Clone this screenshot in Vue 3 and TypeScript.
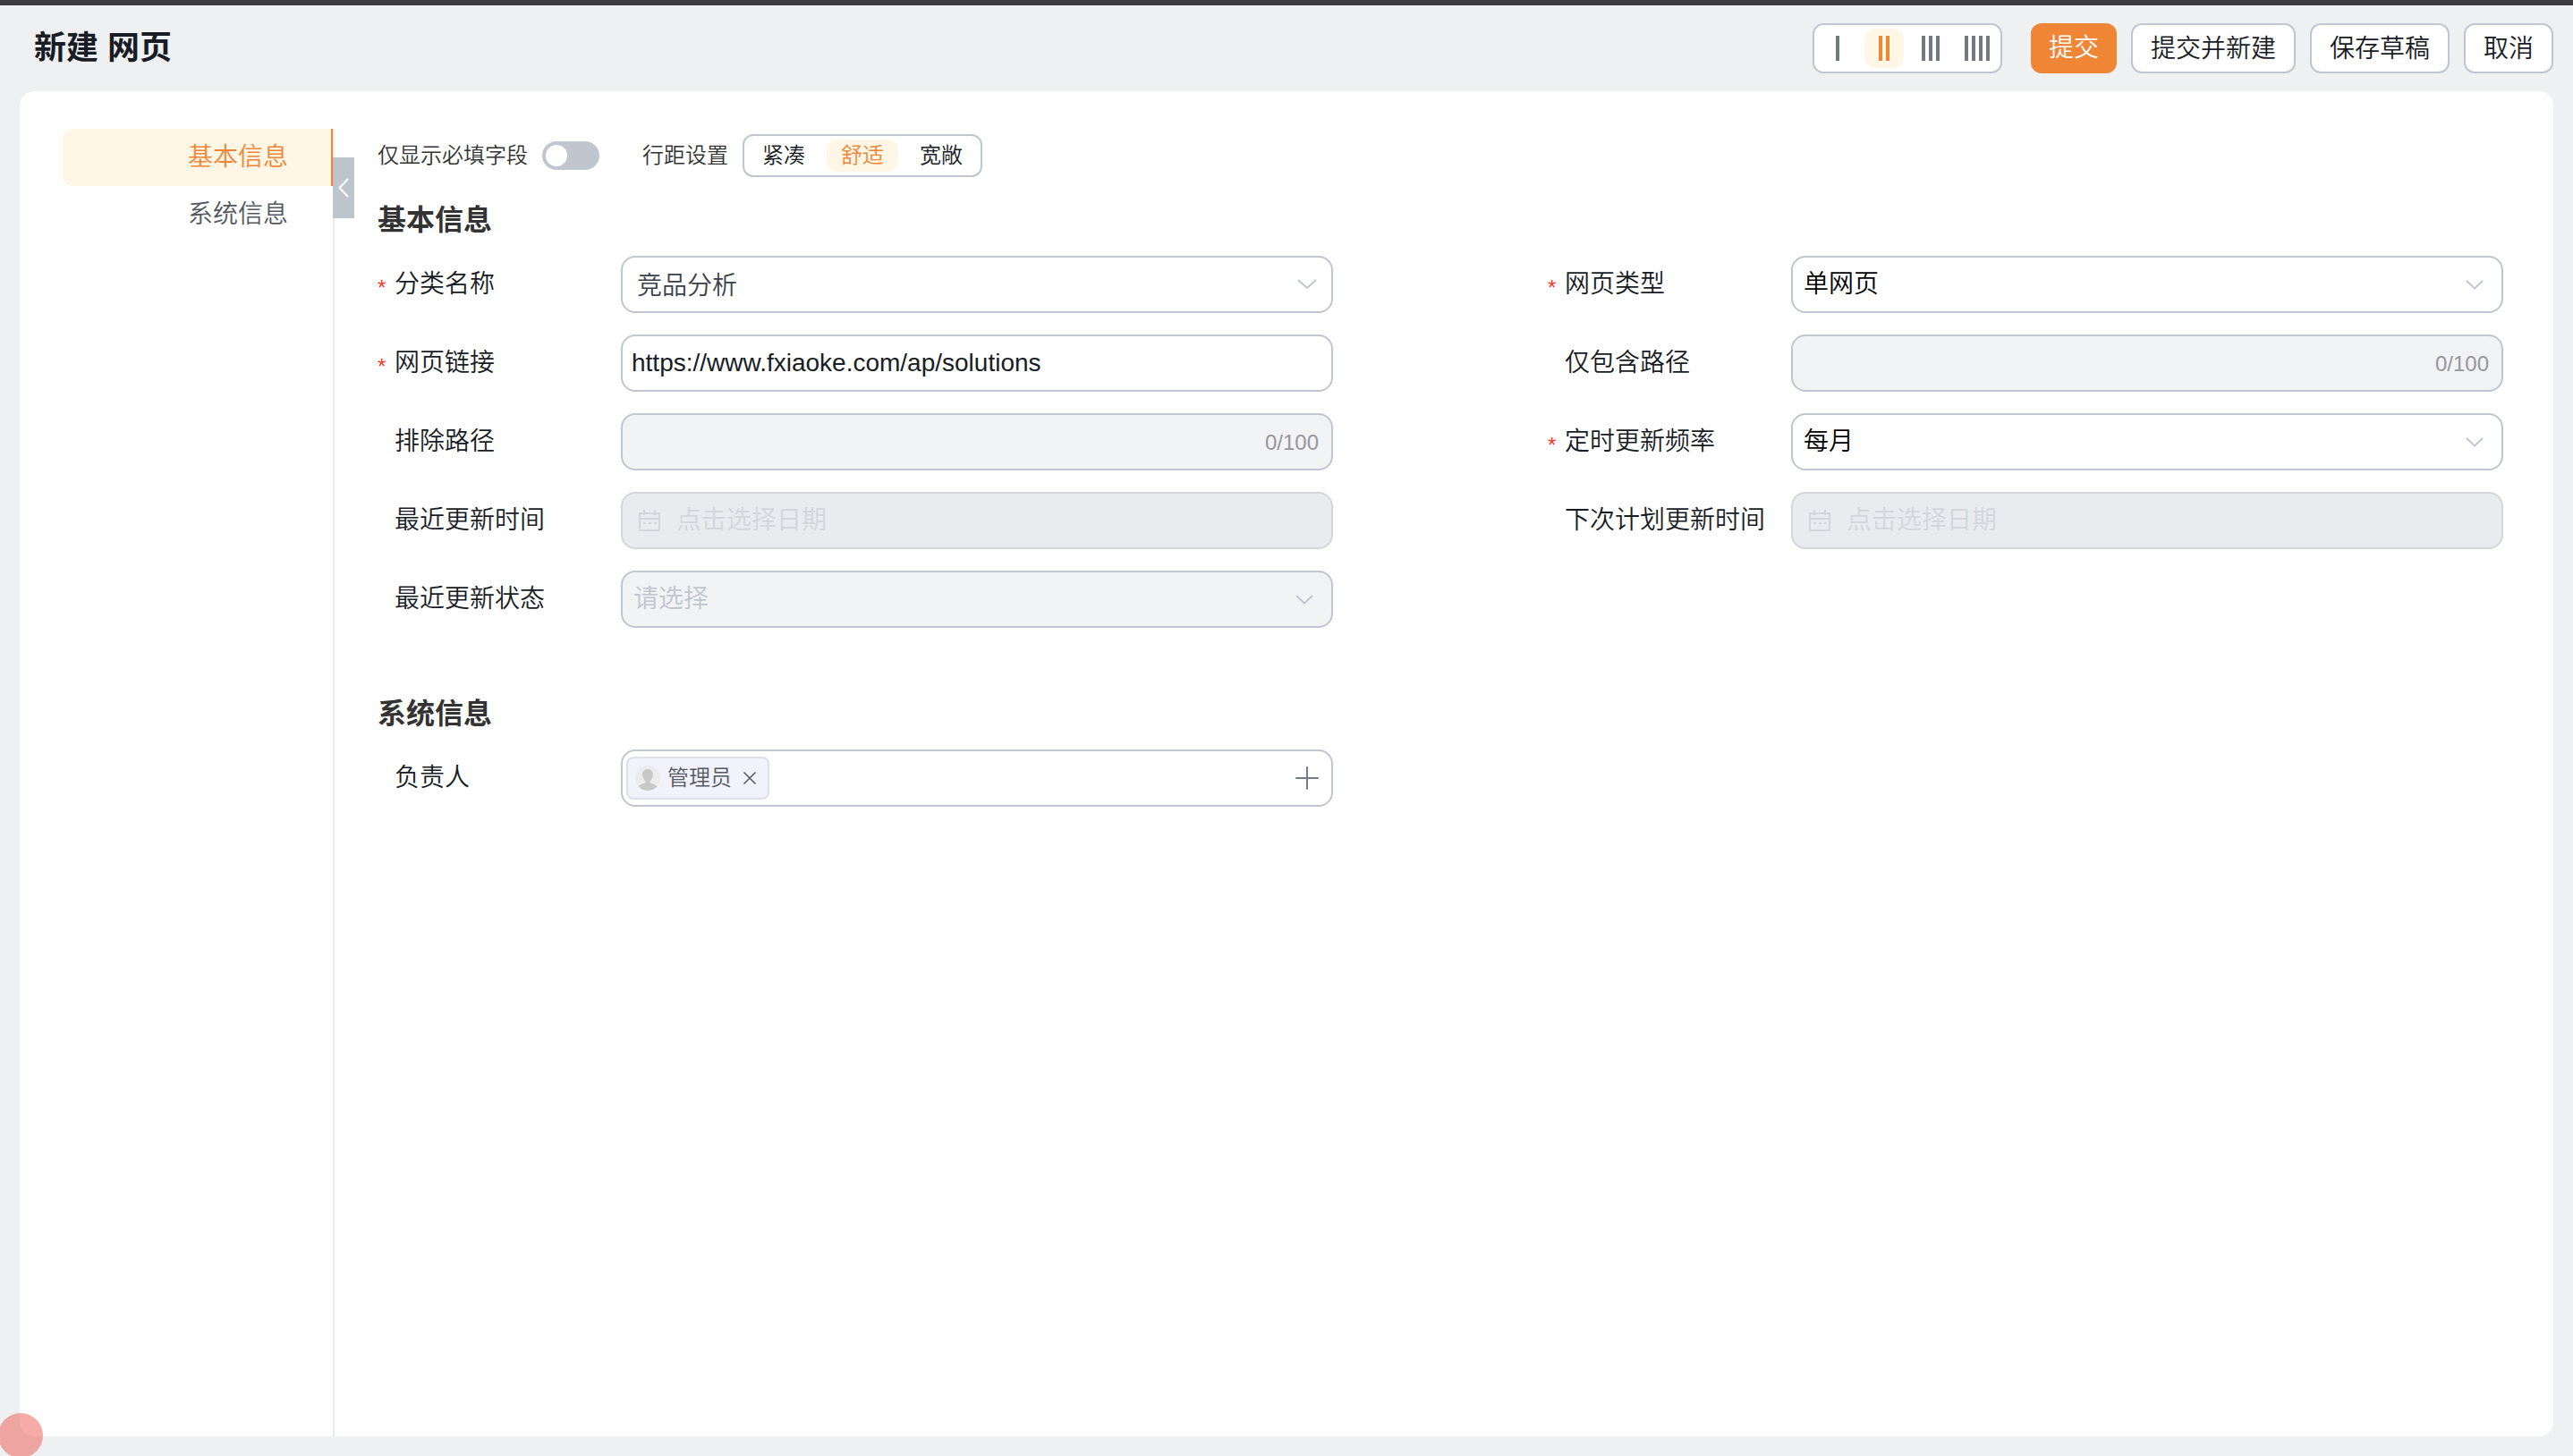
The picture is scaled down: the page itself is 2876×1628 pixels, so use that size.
<script setup lang="ts">
import { ref } from 'vue'

interface Choice {
  value: string
  label: string
}

interface Field {
  id: string
  label: string
  kind: 'search' | 'select' | 'text' | 'counted' | 'date'
  required?: boolean
  disabled?: boolean
  placeholder?: string
}

const navItems: Choice[] = [
  { value: 'basic', label: '基本信息' },
  { value: 'system', label: '系统信息' },
]
const activeNav = ref('basic')

const columnCounts = [1, 2, 3, 4]
const columns = ref(2)

const spacings: Choice[] = [
  { value: 'compact', label: '紧凑' },
  { value: 'comfortable', label: '舒适' },
  { value: 'loose', label: '宽敞' },
]
const spacing = ref('comfortable')
const requiredOnly = ref(false)

const fields: Field[] = [
  { id: 'category', label: '分类名称', kind: 'search', required: true },
  { id: 'pageType', label: '网页类型', kind: 'select', required: true },
  { id: 'url', label: '网页链接', kind: 'text', required: true },
  { id: 'includePath', label: '仅包含路径', kind: 'counted', disabled: true },
  { id: 'excludePath', label: '排除路径', kind: 'counted', disabled: true },
  { id: 'frequency', label: '定时更新频率', kind: 'select', required: true },
  { id: 'lastUpdate', label: '最近更新时间', kind: 'date', disabled: true, placeholder: '点击选择日期' },
  { id: 'nextUpdate', label: '下次计划更新时间', kind: 'date', disabled: true, placeholder: '点击选择日期' },
  { id: 'lastStatus', label: '最近更新状态', kind: 'select', disabled: true, placeholder: '请选择' },
]

const options: Record<string, string[]> = {
  category: ['竞品分析'],
  pageType: ['单网页'],
  frequency: ['每月'],
}

const form = ref<Record<string, string>>({
  category: '竞品分析',
  pageType: '单网页',
  url: 'https://www.fxiaoke.com/ap/solutions',
  includePath: '',
  excludePath: '',
  frequency: '每月',
  lastUpdate: '',
  nextUpdate: '',
  lastStatus: '',
})

const owners = ref<string[]>(['管理员'])
function removeOwner(name: string) {
  owners.value = owners.value.filter((o) => o !== name)
}
</script>

<template>
  <div class="page">
    <header class="header">
      <h1 class="title">新建 网页</h1>
      <div class="columns" role="radiogroup" aria-label="列数">
        <label v-for="n in columnCounts" :key="n" class="column-option" :class="{ active: columns === n }">
          <input v-model="columns" class="hidden-input" type="radio" name="columns" :value="n" :aria-label="`${n} 列`" />
          <svg width="28" height="28" viewBox="0 0 28 28" aria-hidden="true">
            <rect v-for="i in n" :key="i" :x="(i - 1) * 8" y="0" width="4" height="28" fill="currentColor" />
          </svg>
        </label>
      </div>
      <div class="actions">
        <button type="button" class="btn primary">提交</button>
        <button type="button" class="btn">提交并新建</button>
        <button type="button" class="btn">保存草稿</button>
        <button type="button" class="btn">取消</button>
      </div>
    </header>

    <main class="panel">
      <nav class="side">
        <a
          v-for="item in navItems"
          :key="item.value"
          class="side-link"
          :class="{ active: activeNav === item.value }"
          :href="`#${item.value}`"
          @click="activeNav = item.value"
          >{{ item.label }}</a
        >
      </nav>

      <div class="content">
        <button type="button" class="collapse" aria-label="收起">
          <svg width="12" height="22" viewBox="0 0 12 22" aria-hidden="true">
            <path d="M11 1L1.500 11L11 21" fill="none" stroke="#fff" stroke-width="2" />
          </svg>
        </button>

        <div class="toolbar">
          <label for="requiredOnly">仅显示必填字段</label>
          <input id="requiredOnly" v-model="requiredOnly" class="switch" type="checkbox" role="switch" />
          <span id="spacingLabel" class="spacing-label">行距设置</span>
          <div class="spacing" role="radiogroup" aria-labelledby="spacingLabel">
            <label v-for="s in spacings" :key="s.value" class="spacing-option" :class="{ active: spacing === s.value }">
              <input v-model="spacing" class="hidden-input" type="radio" name="spacing" :value="s.value" />{{ s.label }}
            </label>
          </div>
        </div>

        <section>
          <h2 id="basic" class="section-title">基本信息</h2>
          <div class="grid">
            <div v-for="f in fields" :key="f.id" class="field">
              <span class="star">{{ f.required ? '*' : '' }}</span>
              <label class="label" :for="f.id">{{ f.label }}</label>
              <div class="control" :class="[f.kind, { disabled: f.disabled }]">
                <svg v-if="f.kind === 'date'" class="calendar" width="24" height="24" viewBox="0 0 24 24" aria-hidden="true">
                  <path d="M1 4H23V23H1ZM1 10H23M6 0V6M18 0V6" fill="none" stroke="currentColor" stroke-width="2" />
                  <path d="M5 15H8M11 15H14M17 15H20" stroke="currentColor" stroke-width="2" />
                </svg>
                <select v-if="f.kind === 'select' || f.kind === 'search'" :id="f.id" v-model="form[f.id]" :disabled="f.disabled">
                  <option v-if="f.placeholder" value="">{{ f.placeholder }}</option>
                  <option v-for="o in options[f.id]" :key="o" :value="o">{{ o }}</option>
                </select>
                <input
                  v-else
                  :id="f.id"
                  v-model="form[f.id]"
                  type="text"
                  :maxlength="f.kind === 'counted' ? 100 : undefined"
                  :placeholder="f.placeholder"
                  :disabled="f.disabled"
                />
                <span v-if="f.kind === 'counted'" class="counter">{{ form[f.id].length }}/100</span>
                <svg v-if="f.kind === 'search'" class="chevron" width="22" height="12" viewBox="0 0 22 12" aria-hidden="true">
                  <path d="M1.500 1.500L11 10L20.500 1.500" fill="none" stroke="currentColor" stroke-width="2" stroke-linecap="round" />
                </svg>
                <svg v-if="f.kind === 'select'" class="chevron" width="20" height="12" viewBox="0 0 20 12" aria-hidden="true">
                  <path d="M1.500 2.500L10 10.500L18.500 2.500" fill="none" stroke="currentColor" stroke-width="2" stroke-linecap="round" />
                </svg>
              </div>
            </div>
          </div>
        </section>

        <section class="system">
          <h2 id="system" class="section-title">系统信息</h2>
          <div class="grid">
            <div class="field">
              <span class="star"></span>
              <label class="label" for="owner">负责人</label>
              <div class="control people">
                <span v-for="o in owners" :key="o" class="tag">
                  <svg width="28" height="28" viewBox="0 0 28 28" aria-hidden="true">
                    <circle cx="14" cy="14" r="14" fill="#ececec" />
                    <path
                      d="M14 4C10.200 4 8.200 6.500 8.200 10C8.200 13 9.600 16 11.500 17.400V19.200C9 20.500 5.600 20.500 3.800 23.500A14 14 0 0 0 24.200 23.500C22.400 20.500 19 20.500 16.500 19.200V17.400C18.400 16 19.800 13 19.800 10C19.800 6.500 17.800 4 14 4Z"
                      fill="#c8c8c8"
                    />
                  </svg>
                  <span class="tag-name">{{ o }}</span>
                  <button type="button" class="icon-btn" :aria-label="`移除${o}`" @click="removeOwner(o)">
                    <svg width="16" height="16" viewBox="0 0 16 16" aria-hidden="true">
                      <path d="M1.500 1.500L14.500 14.500M14.500 1.500L1.500 14.500" stroke="#545861" stroke-width="1.500" />
                    </svg>
                  </button>
                </span>
                <input id="owner" type="text" />
                <button type="button" class="icon-btn add" aria-label="添加负责人">
                  <svg width="26" height="26" viewBox="0 0 26 26" aria-hidden="true">
                    <path d="M1 13H25M13 1V25" stroke="#737b89" stroke-width="2" stroke-linecap="round" />
                  </svg>
                </button>
              </div>
            </div>
          </div>
        </section>
      </div>
    </main>

    <div class="pointer"></div>
  </div>
</template>

<style>
body {
  margin: 0;
  background: #eff0f2;
}
</style>

<style scoped>
.page {
  box-sizing: border-box;
  min-height: 100vh;
  padding: 0 22px 22px;
  display: flex;
  flex-direction: column;
  border-top: 6px solid #3d3c3e;
  background: #eff0f2;
  color: #181c25;
  font-family: 'Liberation Sans', 'Noto Sans CJK SC', sans-serif;
  font-size: 28px;
  font-weight: 350;
  line-height: 40px;
}
.page *,
.page *::before {
  box-sizing: border-box;
}
button,
input,
select {
  margin: 0;
  font: inherit;
  color: inherit;
}
.hidden-input {
  position: absolute;
  width: 1px;
  height: 1px;
  opacity: 0;
}

.header {
  height: 96px;
  flex: none;
  display: flex;
  align-items: center;
}
.title {
  margin: 0;
  padding: 0 16px;
  flex: 1;
  font-size: 36px;
  line-height: 48px;
  font-weight: 700;
}
.columns {
  height: 56px;
  margin-right: 32px;
  padding: 0 12px 0 8px;
  display: flex;
  align-items: center;
  gap: 4px;
  border: 2px solid #c1c5ce;
  border-radius: 12px;
  background: #fff;
  color: #737882;
}
.column-option {
  width: 44px;
  height: 44px;
  padding: 8px 0 8px 16px;
  display: flex;
  border-radius: 12px;
  cursor: pointer;
}
.column-option svg {
  flex: none;
}
.column-option.active,
.spacing-option.active {
  background: #fff6e6;
  color: #ee8636;
}
.actions {
  display: flex;
  gap: 16px;
}
.btn {
  height: 56px;
  padding: 2px 20px 0;
  border: 2px solid #c1c5ce;
  border-radius: 12px;
  background: #fff;
  line-height: 40px;
  cursor: pointer;
}
.btn.primary {
  padding: 0 20px;
  border: 0;
  background: #ee8636;
  color: #fff;
}

.panel {
  flex: 1;
  padding: 42px 56px 0 48px;
  display: flex;
  border-radius: 16px;
  background: #fff;
}
.side {
  width: 302px;
  flex: none;
  display: flex;
  flex-direction: column;
}
.side-link {
  height: 64px;
  padding-right: 48px;
  border-right: 2px solid transparent;
  border-radius: 12px 0 0 12px;
  color: #545861;
  line-height: 64px;
  text-align: right;
  text-decoration: none;
}
.side-link.active {
  border-color: #ee8636;
  background: #fff6e6;
  color: #ee8636;
}

.content {
  position: relative;
  min-width: 0;
  flex: 1;
  padding: 6px 0 0 48px;
  border-left: 2px solid #eaebef;
}
.collapse {
  position: absolute;
  left: -2px;
  top: 32px;
  width: 24px;
  height: 68px;
  padding: 0;
  display: flex;
  align-items: center;
  justify-content: center;
  border: 0;
  background: #bdc4cc;
}
.toolbar {
  height: 48px;
  display: flex;
  align-items: center;
  color: #333;
  font-size: 24px;
  line-height: 36px;
}
.switch {
  appearance: none;
  width: 64px;
  height: 32px;
  margin: 0 48px 0 16px;
  padding: 4px;
  display: flex;
  border-radius: 16px;
  background: #c1c5ce;
}
.switch::before {
  content: '';
  width: 24px;
  height: 24px;
  border-radius: 50%;
  background: #fff;
}
.switch:checked {
  justify-content: flex-end;
  background: #ee8636;
}
.spacing {
  height: 48px;
  margin-left: 16px;
  padding: 0 4px;
  display: flex;
  align-items: center;
  gap: 8px;
  border: 2px solid #c1c5ce;
  border-radius: 12px;
  color: #181c25;
}
.spacing-option {
  height: 36px;
  padding: 0 16px;
  border-radius: 12px;
  cursor: pointer;
}

.section-title {
  margin: 24px 0 16px;
  color: #333;
  font-size: 32px;
  line-height: 48px;
  font-weight: 700;
}
.system {
  margin-top: 72px;
}
.grid {
  display: grid;
  grid-template-columns: 1fr 1fr;
  gap: 24px 240px;
}
.field {
  height: 64px;
  display: flex;
}
.star {
  width: 19px;
  flex: none;
  color: #f5392b;
  font-size: 24px;
  font-weight: 400;
  line-height: 72px;
}
.label {
  width: 253px;
  flex: none;
  line-height: 64px;
}
.control {
  min-width: 0;
  height: 64px;
  flex: 1;
  display: flex;
  align-items: center;
  border: 2px solid #c1c5ce;
  border-radius: 16px;
  background: #fff;
  color: #c1c5ce;
}
.control input,
.control select {
  appearance: none;
  min-width: 0;
  height: 60px;
  flex: 1;
  padding: 0 10px;
  border: 0;
  outline: 0;
  background: none;
  color: #181c25;
  opacity: 1;
}
.control select {
  padding: 0 12px;
  color: #000;
}
.control.search select {
  padding: 4px 16px 0;
  color: #3c404b;
}
.control.disabled {
  background: #f2f3f5;
}
.control.disabled select {
  color: #c1c5ce;
}
.control.date {
  padding-left: 18px;
  border-color: #d5d6db;
  background: #eaebef;
  color: #d5d6db;
}
.control.date input {
  padding: 0 18px;
}
.control.date input::placeholder {
  color: #d5d6db;
  opacity: 1;
}
.calendar {
  flex: none;
}
.chevron {
  flex: none;
  margin-right: 20px;
}
.search .chevron {
  margin-right: 16px;
}
.counter {
  padding: 2px 14px 0 0;
  color: #95979c;
  font-size: 24px;
}
.people {
  padding-left: 4px;
}
.tag {
  height: 48px;
  padding: 0 12px 0 8px;
  display: flex;
  align-items: center;
  gap: 8px;
  border: 2px solid #dedfe9;
  border-radius: 8px;
  background: #f1f2fc;
  color: #545861;
  font-size: 24px;
}
.tag-name {
  margin-right: 4px;
}
.icon-btn {
  padding: 0;
  display: flex;
  border: 0;
  background: none;
  cursor: pointer;
}
.icon-btn.add {
  margin-right: 14px;
}

.pointer {
  position: fixed;
  left: -2px;
  bottom: -2px;
  width: 50px;
  height: 50px;
  border-radius: 50%;
  background: rgba(237, 87, 77, 0.5);
  pointer-events: none;
}
</style>
